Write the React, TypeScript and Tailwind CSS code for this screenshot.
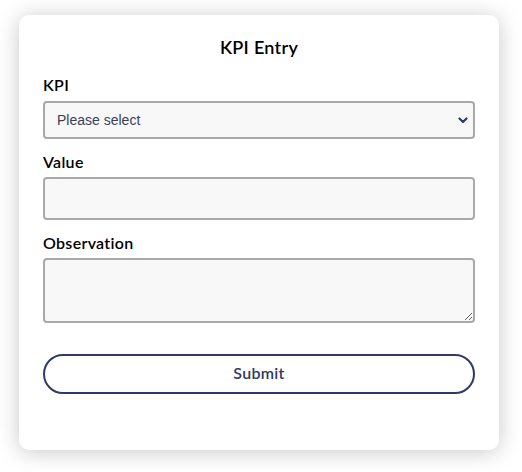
import React, { useState } from 'react';

export default function App() {
  const [kpi, setKpi] = useState('');
  const [value, setValue] = useState('');
  const [observation, setObservation] = useState('');

  return (
    <div className="min-h-[472px] w-[522px] bg-white pt-[15px] pl-[19px] font-['Lato',sans-serif]">
      <div className="w-[480px] h-[435px] bg-white rounded-[10px] shadow-[0_2px_22px_rgba(0,0,0,0.22)] px-6 pt-[22px]">
        {/* Header */}
        <h1 className="text-center text-[18px] font-semibold tracking-[0.3px] text-black leading-5">KPI Entry</h1>

        <form
          className="mt-[18px] flex flex-col"
          onSubmit={(e) => e.preventDefault()}
        >
          {/* KPI select */}
          <label className="text-[16px] font-semibold tracking-[0.3px] text-black leading-5">KPI</label>
          <div className="relative mt-[6px]">
            <select
              value={kpi}
              onChange={(e) => setKpi(e.target.value)}
              className="appearance-none w-full h-[38px] rounded-[4px] border-2 border-[#a9a9a9] bg-[#f8f8f8] pl-[12px] pr-8 font-['Liberation_Sans',Arial,sans-serif] text-[14px] text-[#3a3f55] outline-none"
            >
              <option value="">Please select</option>
              <option value="revenue">Revenue</option>
              <option value="churn">Churn</option>
            </select>
            <svg
              className="pointer-events-none absolute right-[7px] top-[16px]"
              width="10"
              height="7"
              viewBox="0 0 10 7"
              fill="none"
            >
              <path d="M1.5 1.5 L5 5 L8.5 1.5" stroke="#2f3a68" strokeWidth="2.2" strokeLinecap="round" strokeLinejoin="round" />
            </svg>
          </div>

          {/* Value */}
          <label className="mt-[13px] text-[16px] font-semibold tracking-[0.3px] text-black leading-5">Value</label>
          <input
            value={value}
            onChange={(e) => setValue(e.target.value)}
            className="mt-[5px] w-full h-[43px] rounded-[4px] border-2 border-[#a9a9a9] bg-[#f8f8f8] px-3 text-[14px] outline-none"
          />

          {/* Observation */}
          <label className="mt-[13px] text-[16px] font-semibold tracking-[0.3px] text-black leading-5">Observation</label>
          <textarea
            value={observation}
            onChange={(e) => setObservation(e.target.value)}
            className="mt-[5px] w-full h-[65px] rounded-[4px] border-2 border-[#a9a9a9] bg-[#f8f8f8] px-3 py-2 text-[14px] outline-none resize"
          />

          <button
            type="submit"
            className="mt-[31px] w-full h-[40px] rounded-full border-2 border-[#2f3a68] bg-white pb-[2px] text-[16px] font-semibold tracking-[0.3px] text-[#2f3a5e]"
          >
            Submit
          </button>
        </form>
      </div>
    </div>
  );
}
